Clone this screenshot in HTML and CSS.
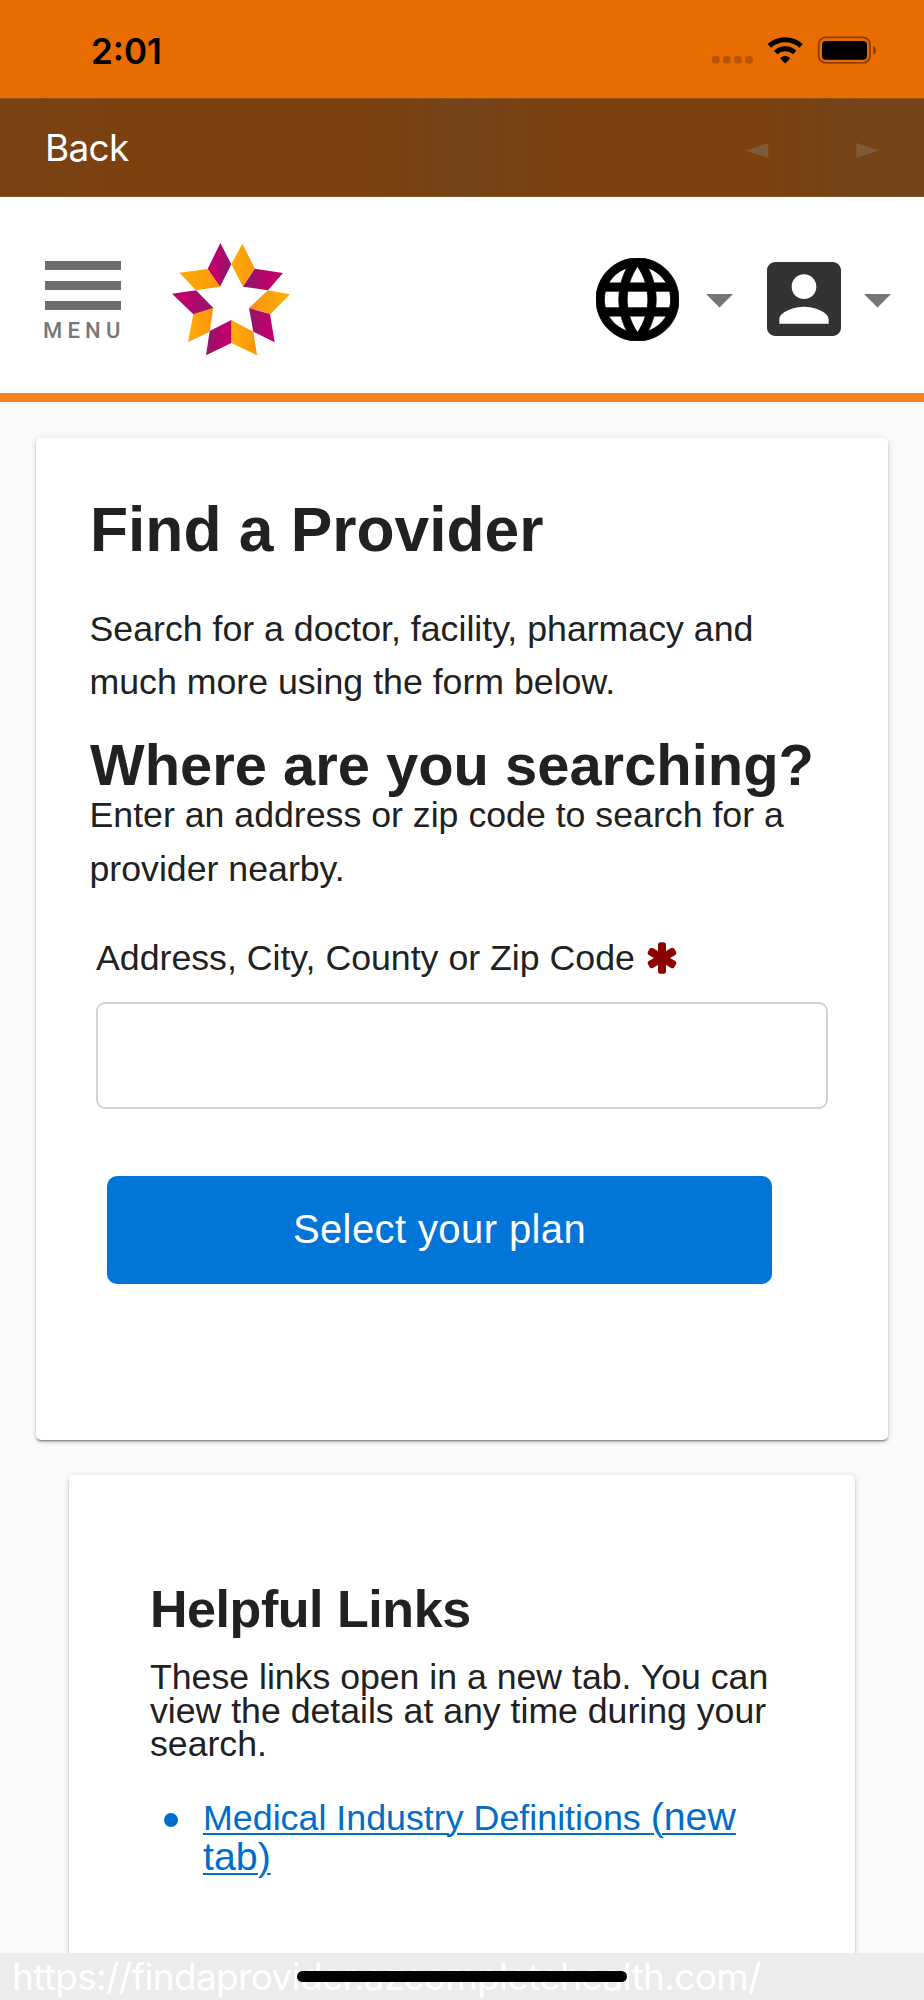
FILE: index.html
```html
<!DOCTYPE html>
<html lang="en">
<head>
<meta charset="utf-8">
<title>Find a Provider</title>
<link rel="stylesheet" href="styles.css">
</head>
<body>
<div class="screen">
  <div class="status">
    <span class="time">2:01</span>
    <svg class="status-icons" viewBox="712 34 166 32" width="166" height="32">
      <g fill="#b75505"><rect x="712" y="56" width="7.6" height="7.4" rx="2.6"/><rect x="723" y="56" width="7.6" height="7.4" rx="2.6"/><rect x="734" y="56" width="7.6" height="7.4" rx="2.6"/><rect x="745.2" y="56" width="7.6" height="7.4" rx="2.6"/></g>
      <g fill="none" stroke="#000" stroke-width="5">
        <path d="M769.3 45.9A23.5 23.5 0 0 1 801.1 45.9"/>
        <path d="M775.7 52.5A14.2 14.2 0 0 1 794.7 52.5"/>
      </g>
      <path d="M780 58.2Q785.2 53.2 790.4 58.2L785.2 63.4Z"/>
      <rect x="818.6" y="37.4" width="51.4" height="25.4" rx="7" fill="none" stroke="#8b4103" stroke-width="1.8"/>
      <rect x="822" y="41" width="45" height="18.7" rx="4"/>
      <path d="M873 46Q876 47 876 50.3T873 54.8Z" fill="#8b4103"/>
    </svg>
  </div>
  <div class="nav">
    <span class="back">Back</span>
    <svg class="arrow" viewBox="0 0 23 15" width="23" height="15"><path d="M0 7.5L22.3 0V15Z"/></svg>
    <svg class="arrow" viewBox="0 0 23 15" width="23" height="15"><path d="M22.7 7.5L0.4 0V15Z"/></svg>
  </div>
  <header class="header">
    <div class="menu">
      <i class="bar"></i><i class="bar"></i><i class="bar"></i>
      <span class="menu-label">MENU</span>
    </div>
    <svg class="logo" viewBox="516 98 354 337" width="118" height="112.3">
      <defs>
        <linearGradient id="o" x1="0" x2="1"><stop offset="0" stop-color="#ffab08"/><stop offset="1" stop-color="#fb9609"/></linearGradient>
        <linearGradient id="o2" x1="1" x2="0"><stop offset="0" stop-color="#ffb000"/><stop offset="1" stop-color="#f8901a"/></linearGradient>
        <linearGradient id="p" x1="0" x2="1"><stop offset=".35" stop-color="#bd006b"/><stop offset="1" stop-color="#8a1b66"/></linearGradient>
        <linearGradient id="p2" x1="1" x2="0"><stop offset=".35" stop-color="#bd006b"/><stop offset="1" stop-color="#8a1b66"/></linearGradient>
      </defs>
      <path fill="url(#p)" d="M661 98L694 162 660 229 623 176Z"/>
      <path fill="url(#o)" d="M727 100L764 174 729 229 694 162Z"/>
      <path fill="url(#p2)" d="M764 175L849 188 804 240 729 229Z"/>
      <path fill="url(#o2)" d="M804 240L870 252 812 311 747 293Z"/>
      <path fill="url(#p2)" d="M747 293L810 311 824 396 760 364Z"/>
      <path fill="url(#o)" d="M694 329L760 364 771 435 694 398Z"/>
      <path fill="url(#p2)" d="M694 329V398L618 435 629 362Z"/>
      <path fill="url(#o)" d="M640 293L629 364 564 396 580 312Z"/>
      <path fill="url(#p)" d="M516 250L588 240 640 293 580 312Z"/>
      <path fill="url(#o)" d="M538 187L623 176 660 229 588 240Z"/>
    </svg>
    <div class="tools">
      <svg class="globe" viewBox="2 2 20 20" width="83" height="83"><path d="M11.99 2C6.47 2 2 6.48 2 12s4.47 10 9.99 10C17.52 22 22 17.52 22 12S17.52 2 11.99 2zm6.93 6h-2.95c-.32-1.25-.78-2.45-1.38-3.56 1.84.63 3.37 1.91 4.33 3.56zM12 4.04c.83 1.2 1.48 2.53 1.91 3.96h-3.82c.43-1.43 1.08-2.76 1.91-3.96zM4.26 14C4.1 13.36 4 12.69 4 12s.1-1.36.26-2h3.38c-.08.66-.14 1.32-.14 2 0 .68.06 1.34.14 2H4.26zm.82 2h2.95c.32 1.25.78 2.45 1.38 3.56-1.84-.63-3.37-1.9-4.33-3.56zm2.95-8H5.08c.96-1.66 2.49-2.93 4.33-3.56C8.81 5.55 8.35 6.75 8.03 8zM12 19.96c-.83-1.2-1.48-2.53-1.91-3.96h3.82c-.43 1.43-1.08 2.76-1.91 3.96zM14.34 14H9.66c-.09-.66-.16-1.32-.16-2 0-.68.07-1.35.16-2h4.68c.09.65.16 1.32.16 2 0 .68-.07 1.34-.16 2zm.25 5.56c.6-1.11 1.06-2.31 1.38-3.56h2.95c-.96 1.65-2.49 2.93-4.33 3.56zM16.36 14c.08-.66.14-1.32.14-2 0-.68-.06-1.34-.14-2h3.38c.16.64.26 1.31.26 2s-.1 1.36-.26 2h-3.38z"/></svg>
      <svg class="caret" viewBox="0 0 27 14" width="27" height="14"><path d="M0 0H27L13.5 13.5Z"/></svg>
      <svg class="person" viewBox="3 3 18 18" width="74" height="74"><path d="M3 5v14c0 1.1.89 2 2 2h14c1.1 0 2-.9 2-2V5c0-1.1-.9-2-2-2H5c-1.11 0-2 .9-2 2zm12 4c0 1.66-1.34 3-3 3s-3-1.34-3-3 1.34-3 3-3 3 1.34 3 3zm-9 8c0-2 4-3.1 6-3.1s6 1.1 6 3.1v1H6v-1z"/></svg>
      <svg class="caret" viewBox="0 0 27 14" width="27" height="14"><path d="M0 0H27L13.5 13.5Z"/></svg>
    </div>
  </header>
  <main class="page">
    <section class="card find">
      <h1 class="title">Find a Provider</h1>
      <p class="text">Search for a doctor, facility, pharmacy and<br>much more using the form below.</p>
      <h2 class="subtitle">Where are you searching?</h2>
      <p class="text">Enter an address or zip code to search for a<br>provider nearby.</p>
      <label class="label" for="addr"><span>Address, City, County or Zip Code</span>
        <svg class="req" viewBox="-15 -16 30 32" width="30" height="32"><rect x="-4" y="-15.7" width="8" height="31.4" rx="2.8"/><rect x="-4" y="-15.3" width="8" height="30.6" rx="2.8" transform="rotate(60)"/><rect x="-4" y="-15.3" width="8" height="30.6" rx="2.8" transform="rotate(-60)"/></svg>
      </label>
      <input class="field" id="addr" type="text">
      <button class="button" type="button">Select your plan</button>
    </section>
    <section class="card links">
      <h3 class="links-title">Helpful Links</h3>
      <p class="links-text">These links open in a new tab. You can<br>view the details at any time during your<br>search.</p>
      <ul class="list">
        <li class="item"><a class="link" href="#"><span class="link-main">Medical Industry Definitions </span>(new<br>tab)</a></li>
      </ul>
    </section>
  </main>
  <footer class="urlbar"><span class="url">https://findaprovider.azcompletehealth.com/</span><i class="home"></i></footer>
</div>
</body>
</html>
```
FILE: styles.css
```css
* { box-sizing: border-box; }
body { margin: 0; font-family: "Liberation Sans", Arial, sans-serif; color: #212121; }
h1, h2, h3, p, ul { margin: 0; padding: 0; }
svg { display: block; flex: none; }
.screen { display: flex; flex-direction: column; width: 924px; height: 2000px; overflow: hidden; background: #fafafa; }

.status { flex: none; display: flex; justify-content: space-between; height: 98px; padding: 34px 46px 0 91px; background: #e86c00; }
.time { font: 600 35px/34px Inter, sans-serif; color: #000; letter-spacing: 0; }

.nav { flex: none; display: flex; align-items: center; height: 98.6px; padding: 0 45px; background: linear-gradient(90deg, #794316 0, #7d400e 160px, #7d400e 350px, #744419 465px, #7d400e 590px, #7d400e 750px, #744419 850px, #74441b 924px); border-top: 1px solid #87521f; border-bottom: 1px solid #83511f; }
.back { margin: 2px auto 0 0; font: 400 37px/96px Inter, sans-serif; letter-spacing: -.7px; color: #fff; }
.arrow { margin-top: 6px; fill: #7f5b3e; }
.arrow + .arrow { margin-left: 87px; }

.header { flex: none; display: flex; align-items: flex-start; height: 205.4px; padding: 46.4px 33.5px 0 45px; background: #fff; border-bottom: 9px solid #f58220; }
.menu { display: flex; flex-direction: column; gap: 11px; width: 76px; padding-top: 18px; }
.bar { height: 9px; background: #6d6d6d; }
.menu-label { margin: -1px 0 0 -2px; font: 500 22px/22px Roboto, sans-serif; letter-spacing: 5.2px; color: #777; }
.logo { margin-left: 51px; }
.tools { display: flex; align-items: center; margin: 15px 0 0 auto; }
.globe { stroke: #000; stroke-width: .2; }
.caret { margin: 3px 0 0 27px; fill: #757575; }
.person { margin-left: 34px; fill: #333; }
.person + .caret { margin-left: 23px; }

.page { flex: 1; min-height: 0; overflow: hidden; display: flex; flex-direction: column; align-items: center; padding-top: 36px; gap: 35px; }
.card { flex: none; background: #fff; border-radius: 5px; box-shadow: 0 2px 2px -1px rgba(0,0,0,.4), 0 2px 3px rgba(0,0,0,.14), 0 1px 7px rgba(0,0,0,.12); }
.find { width: 852px; height: 1001.6px; padding: 61.2px 54px 0; }
.title { font-size: 62.3px; line-height: 62px; margin-bottom: 41.4px; white-space: nowrap; }
.text { margin-left: -.5px; font-size: 35.7px; line-height: 53.6px; white-space: nowrap; }
.subtitle { margin-top: 32.7px; font-size: 57.9px; line-height: 46.9px; white-space: nowrap; }
.label { display: flex; align-items: flex-start; margin: 35.5px 0 16.6px 6px; font-size: 35.7px; line-height: 53.6px; white-space: nowrap; }
.req { margin: 10px 0 0 12px; fill: #8b0000; }
.field { display: block; width: 731.5px; height: 106.7px; margin-left: 6px; padding: 0 20px; border: 2px solid #ced4da; border-radius: 9px; font-size: 38px; background: #fff; }
.button { display: block; width: 665px; height: 107.7px; margin: 67px 0 0 17px; padding: 0; border: 0; border-radius: 10px; background: #0275d8; color: #fff; font: 400 40px "Liberation Sans", Arial, sans-serif; letter-spacing: .4px; }
.links { width: 786px; height: 600px; padding: 104.3px 81px 0; }
.links-title { font-size: 52px; line-height: 60px; letter-spacing: -.45px; }
.links-text { margin-top: 22.6px; font-size: 35.65px; line-height: 33.5px; white-space: nowrap; }
.list { margin-top: 33.7px; list-style: none; }
.item { display: flex; font-size: 39.3px; line-height: 40px; color: #006dca; white-space: nowrap; }
.item::before { content: ""; flex: none; width: 14px; height: 14px; margin: 17.5px 25px 0 14px; border-radius: 50%; background: #006dca; }
.link { color: #006dca; text-decoration: underline; text-decoration-thickness: 2.3px; text-underline-offset: 3px; }
.link-main { font-size: 35.8px; line-height: 1; }

.urlbar { flex: none; position: relative; height: 47px; padding-left: 12px; background: #ececec; }
.url { font: 400 37px/47px Inter, sans-serif; letter-spacing: -.66px; color: #fff; white-space: nowrap; }
.home { position: absolute; left: 297px; top: 17.5px; width: 330px; height: 11.5px; border-radius: 6px; background: #000; }
```
